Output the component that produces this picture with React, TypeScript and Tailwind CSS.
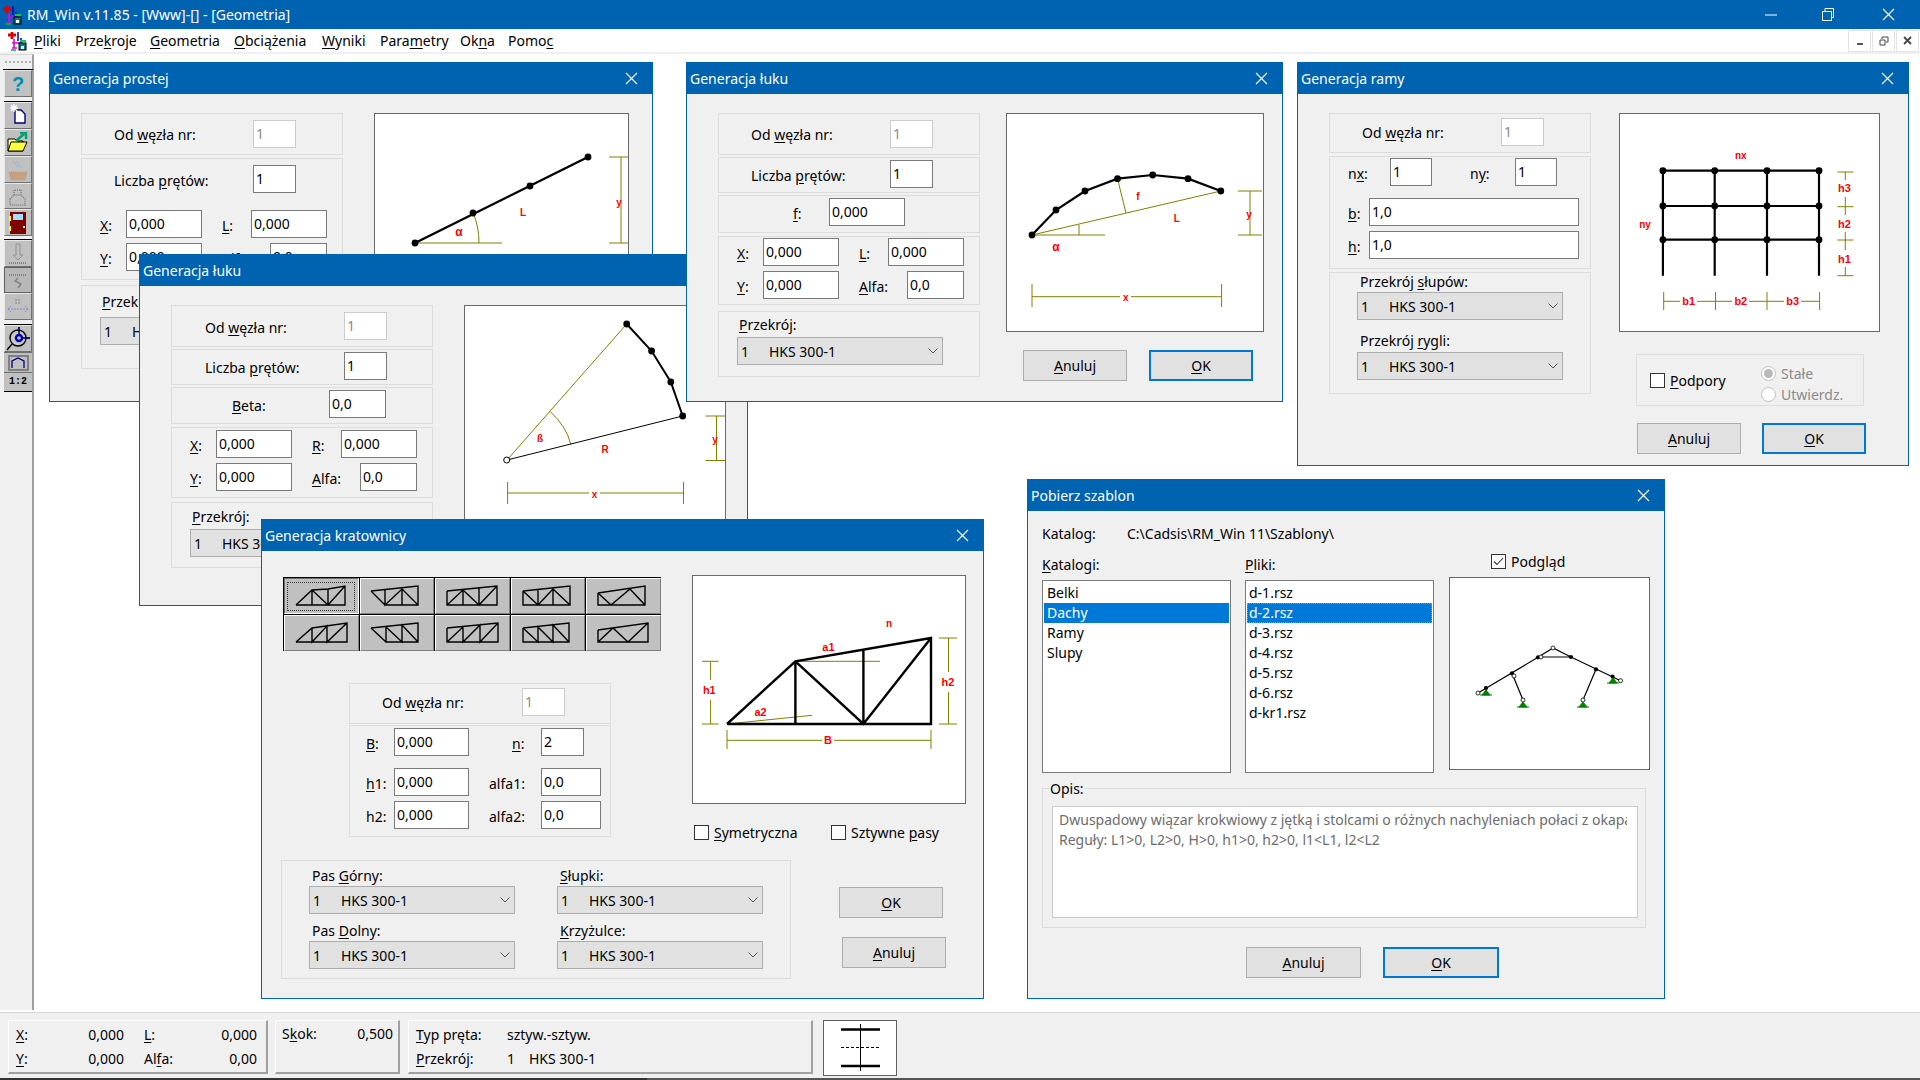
import React from "react";

const U = ({ children }: { children: React.ReactNode }) => <u className="underline underline-offset-2">{children}</u>;

const Dialog = ({ cls, title, children }: { cls: string; title: string; children: React.ReactNode }) => (
  <div className={`absolute box-border border border-[#0063b1] bg-[#f0f0f0] flex flex-col ${cls}`}>
    <div className="h-[31px] shrink-0 bg-[#0063b1] text-white flex items-center justify-between pl-[3px] pr-[14px]">
      <span className="leading-none">{title}</span>
      <svg width="13" height="13" viewBox="0 0 13 13"><path d="M1 1L12 12M12 1L1 12" stroke="#fff" strokeWidth="1.1" /></svg>
    </div>
    {children}
  </div>
);

const Input = ({ cls, v, off }: { cls: string; v: string; off?: boolean }) => (
  <div className={`box-border h-[28px] shrink-0 border bg-white pl-[2px] leading-[26px] ${off ? "border-[#cccccc] text-[#8a8a8a]" : "border-[#7a7a7a] text-black"} ${cls}`}>{v}</div>
);

const Group = ({ cls, children }: { cls: string; children?: React.ReactNode }) => (
  <div className={`box-border border border-[#dcdcdc] shrink-0 ${cls}`}>{children}</div>
);

const Select = ({ cls }: { cls: string }) => (
  <div className={`box-border h-[28px] flex items-center border border-[#adadad] bg-[#e1e1e1] pl-[3px] pr-[4px] shrink-0 ${cls}`}>
    <span className="w-[28px]">1</span>
    <span className="flex-1">HKS 300-1</span>
    <svg width="10" height="6" viewBox="0 0 10 6"><path d="M0.5 0.5L5 5L9.5 0.5" stroke="#555" fill="none" /></svg>
  </div>
);

const Btn = ({ cls, children, ok }: { cls: string; children: React.ReactNode; ok?: boolean }) => (
  <div className={`box-border h-[31px] flex items-center justify-center bg-[#e1e1e1] shrink-0 ${ok ? "border-2 border-[#0078d7]" : "border border-[#adadad]"} ${cls}`}>{children}</div>
);

const Check = ({ on }: { on?: boolean }) => (
  <div className="box-border w-[15px] h-[15px] border border-[#333] bg-white flex items-center justify-center shrink-0">
    {on && <svg width="11" height="9" viewBox="0 0 11 9"><path d="M1 4.5L4 7.5L10 1" stroke="#333" fill="none" strokeWidth="1.1" /></svg>}
  </div>
);

const T = ({ x, y, s, size }: { x: number; y: number; s: string; size?: number }) => (
  <text x={x} y={y + 4} textAnchor="middle" fill="#ff0000" fontSize={size ?? 10} fontWeight="700" fontFamily="Liberation Sans">{s}</text>
);

const Node = ({ x, y }: { x: number; y: number }) => <circle cx={x} cy={y} r="3.4" fill="#000" />;

const OLIVE = "#808000";

const ProstaSvg = () => (
  <svg width="253" height="218" viewBox="375 114 253 218" className="block">
    <path d="M415 243H502M473 213Q479 226 479 243M609 157H628M609 243H628M621 157V243" stroke={OLIVE} fill="none" />
    <path d="M415 243L588 157" stroke="#000" strokeWidth="2.4" />
    {[[415, 243], [473, 213], [530, 186], [588, 157]].map(([x, y]) => <Node key={x} x={x} y={y} />)}
    <T x={619} y={202} s="y" /><T x={523} y={212} s="L" /><T x={459} y={232} s="α" size={12} />
  </svg>
);

const Luk2Svg = () => (
  <svg width="260" height="218" viewBox="465 306 260 218" className="block">
    <path d="M507 460L626.7 324M550.4 411.7Q566 426 570.8 444M705.5 416H725M705.5 460.5H725M716.5 416V460.5M507.6 493H683.5M507.6 482V504M683.5 482V504" stroke={OLIVE} fill="none" />
    <path d="M507 460L682.7 416" stroke="#000" />
    <path d="M626.7 324L651.6 351L670.8 382L682.7 416" stroke="#000" strokeWidth="2" fill="none" />
    {[[626.7, 324], [651.6, 351], [670.8, 382], [682.7, 416]].map(([x, y]) => <Node key={x} x={x} y={y} />)}
    <circle cx="506.7" cy="460" r="3" fill="#fff" stroke="#000" />
    <T x={540} y={438} s="ß" /><T x={605} y={449} s="R" /><T x={715} y={439} s="y" />
    <rect x="589" y="488" width="11" height="11" fill="#fff" /><T x={594.5} y={493.5} s="x" />
  </svg>
);

const Luk3Svg = () => (
  <svg width="256" height="217" viewBox="1007 114 256 217" className="block">
    <path d="M1032 235L1220.8 191M1032 235H1105M1117.5 178.7L1126 213M1079 224.7V235M1238 191H1262M1238 235H1262M1250 191V235M1032 296.7H1221.6M1032 284V307M1221.6 284V307" stroke={OLIVE} fill="none" />
    <path d="M1032 235L1056 210L1085 191L1117.5 178.7L1152.7 175L1188 178.7L1220.8 191" stroke="#000" strokeWidth="2.2" fill="none" />
    {[[1032, 235], [1056, 210], [1085, 191], [1117.5, 178.7], [1152.7, 175], [1188, 178.7], [1220.8, 191]].map(([x, y]) => <Node key={x} x={x} y={y} />)}
    <T x={1138} y={196} s="f" /><T x={1176.7} y={218} s="L" /><T x={1249} y={214} s="y" /><T x={1056} y={247} s="α" size={12} />
    <rect x="1120" y="292" width="11" height="10" fill="#fff" /><T x={1125.7} y={297} s="x" />
  </svg>
);

const RamaSvg = () => {
  const xs = [1662.9, 1714.7, 1767, 1819];
  const ys = [170.7, 206, 239.7];
  return (
    <svg width="259" height="217" viewBox="1620 114 259 217" className="block">
      <path d="M1845.3 172V180M1845.3 197V215M1845.3 232V250M1845.3 267V276M1837.5 172H1853.5M1837.5 206.7H1853.5M1837.5 240H1853.5M1837.5 275.7H1853.5M1663.7 292V310M1715.5 292V310M1767 292V310M1819.6 292V310M1663.7 301.3H1680M1697 301.3H1732M1749 301.3H1784M1801 301.3H1819.6" stroke={OLIVE} fill="none" />
      <path d={xs.map((x) => `M${x} 170.7V275.7`).join("") + ys.map((y) => `M1662.9 ${y}H1819`).join("")} stroke="#000" strokeWidth="2.2" fill="none" />
      {xs.flatMap((x) => ys.map((y) => <Node key={`${x}-${y}`} x={x} y={y} />))}
      <T x={1740.8} y={155} s="nx" /><T x={1645} y={224} s="ny" /><T x={1844.5} y={188} s="h3" size={11} /><T x={1844.5} y={223.7} s="h2" size={11} /><T x={1844.5} y={258.7} s="h1" size={11} />
      <T x={1688.6} y={301} s="b1" size={11} /><T x={1740.8} y={301} s="b2" size={11} /><T x={1792.7} y={301} s="b3" size={11} />
    </svg>
  );
};

const KrataSvg = () => (
  <svg width="272" height="227" viewBox="693 576 272 227" className="block">
    <path d="M795.4 661.3H880M727 724L812 715.3M702 661.3H718.6M702 724H718.6M710.6 661.3V680M710.6 700V724M939 638H957M939 724H957M948.5 638V672M948.5 692V724M727 740.3H822M834 740.3H931M727 730V749M931 730V749" stroke={OLIVE} fill="none" />
    <path d="M727 724H931V638L795.4 661.3L727 724M795.4 661.3V724M795.4 661.3L863.4 724L931 638M863.4 650V724" stroke="#000" strokeWidth="2.4" fill="none" />
    <T x={889} y={623} s="n" /><T x={828.4} y={647} s="a1" size={11} /><T x={760.5} y={712} s="a2" size={11} /><T x={709.3} y={690} s="h1" size={11} /><T x={948} y={681.7} s="h2" size={11} /><T x={828} y={740.3} s="B" size={11} />
  </svg>
);

const SzablonSvg = () => (
  <svg width="199" height="191" viewBox="1450 578 199 191" className="block">
    <path d="M1478 693L1538 657.3L1553 648L1571 657L1620.6 680.7M1541 657H1571M1512 673.3L1523 700M1596 669.3L1583 700" stroke="#000" fill="none" strokeWidth="1.2" />
    {[[1486, 688], [1512, 673.3], [1538, 657.3], [1571, 657], [1596, 669.3], [1612.6, 676.7]].map(([x, y]) => <circle key={x} cx={x} cy={y} r="2.1" fill="#000" />)}
    {[[1478, 693], [1553, 648], [1541, 657], [1620.6, 680.7], [1523, 700], [1583, 700], [1514, 676]].map(([x, y]) => <circle key={x} cx={x} cy={y} r="2" fill="#fff" stroke="#000" strokeWidth="0.8" />)}
    {[[1486, 695], [1523, 707], [1583, 707], [1613, 683]].map(([x, y]) => <path key={x} d={`M${x - 6} ${y}H${x + 6}M${x - 4} ${y}L${x} ${y - 5}L${x + 4} ${y}Z`} stroke="#008000" fill="#008000" />)}
  </svg>
);

const TRUSS = [
  "M1 20H50V1L33 4L17 5L1 20M17 5V20L33 20M17 5L33 20L50 1M33 4V20",
  "M1 6L48 1V20H15L1 6M15 5V20L32 4V20M32 4L48 20",
  "M1 6L51 1V20H1V6M1 20L17 5V20M17 5L33 20L51 1M33 3V20",
  "M1 6L48 1V20H1V6M1 6L16 20L31 4L48 20M16 5V20M31 4V20",
  "M1 8L48 1V20H1V8M1 8L14 20L33 4L48 20",
  "M1 20H52V1L17 6L1 20M17 6V20L32 4V20L52 1",
  "M1 6L48 1V20H16L1 6M16 5V20M16 5L32 20V3L48 20",
  "M1 6L52 1V20H1V6M1 20L17 5V20L34 3V20L52 1",
  "M1 6L47 1V20H1V6M1 6L16 20V5L31 20V3L47 20",
  "M1 8L51 1V20H1V8M1 20L16 6L31 20L51 1",
];

const TrussBtn = ({ d, first }: { d: string; first?: boolean }) => (
  <div className={`box-border h-[37px] border-l border-t border-black`}>
    <div className={`box-border h-full flex items-center justify-center bg-[#c0c0c0] border-b border-r ${first ? "border-t border-l border-t-[#707070] border-l-[#707070] border-b-white border-r-white" : "border-t border-l border-t-white border-l-white border-b-[#808080] border-r-[#808080]"}`}>
      <div className={`box-border w-[68px] h-[29px] flex items-center justify-center ${first ? "border border-dotted border-[#333]" : ""}`}>
        <svg width="53" height="22" viewBox="0 0 53 22"><path d={d} stroke="#000" fill="none" strokeWidth="1.4" /></svg>
      </div>
    </div>
  </div>
);

const TB = ({ cls, children }: { cls: string; children?: React.ReactNode }) => (
  <div className={`box-border bg-[#c0c0c0] border-t border-l border-[#e8e8e8] border-r border-b border-r-[#707070] border-b-[#707070] flex items-center justify-center overflow-hidden ${cls}`}>{children}</div>
);

const Toolbar = () => (
  <div className="w-[34px] shrink-0 box-border border-r-2 border-r-[#a0a0a0] border-t border-t-[#d8d8d8] bg-[#f0f0f0] flex flex-col pl-[4px]">
    <div className="h-[15px] shrink-0 border-b border-[#000] relative mr-[-1px] ml-[-1px]">
      <div className="absolute left-[2px] right-[2px] top-[6px] border-t-2 border-dotted border-[#b0b0b0]" />
    </div>
    <TB cls="h-[27px]"><span className="text-[20px] leading-none font-bold text-[#0090b0] font-['Liberation_Sans',sans-serif]">?</span></TB>
    <div className="h-[5px] shrink-0 border-b border-black" />
    <TB cls="h-[27px]">
      <svg width="22" height="24" viewBox="0 0 22 24"><path d="M8 6H14L18 10V19H8Z" fill="#fff" stroke="#000080" strokeWidth="1.4" /><path d="M7 0V8M3 4H11M4 1L10 7M10 1L4 7" stroke="#fff" strokeWidth="1.3" /></svg>
    </TB>
    <TB cls="h-[27px]">
      <svg width="24" height="22" viewBox="0 0 24 22"><path d="M2 7H9L11 9H17V19H2Z" fill="#ffff80" stroke="#000" /><path d="M2 19L5 10H21L17 19Z" fill="#ffff40" stroke="#000" /><path d="M10 9L18 2M14 1H20V7" stroke="#00a070" strokeWidth="2.4" fill="none" /></svg>
    </TB>
    <TB cls="h-[27px]">
      <svg width="24" height="22" viewBox="0 0 24 22"><path d="M3 13H21L19 21H5Z" fill="#c8a080" stroke="#a0a0a0" strokeDasharray="1 1" /><path d="M7 2L13 9M10 2L16 9" stroke="#80b0d8" strokeDasharray="2 1" /></svg>
    </TB>
    <TB cls="h-[26px]">
      <svg width="24" height="22" viewBox="0 0 24 22"><path d="M8 10V5H15V10M4 14L8 10H15L19 14V20H4Z" fill="none" stroke="#808080" strokeDasharray="1 1" strokeWidth="1.6" /></svg>
    </TB>
    <TB cls="h-[27px]">
      <svg width="22" height="24" viewBox="0 0 22 24"><rect x="3" y="1" width="16" height="22" fill="#800000" /><rect x="6" y="3" width="10" height="6" fill="#a0e0ff" /><rect x="2" y="5" width="2" height="5" fill="#ffff00" /><rect x="2" y="15" width="2" height="5" fill="#ffff00" /><rect x="16" y="15" width="2" height="2" fill="#fff" /></svg>
    </TB>
    <div className="h-[4px] shrink-0 border-b border-black" />
    <TB cls="h-[27px]">
      <svg width="24" height="24" viewBox="0 0 24 24"><path d="M10 2H14V13H17L12 18L7 13H10Z" fill="none" stroke="#909090" /><path d="M3 21H21" stroke="#808080" strokeDasharray="1 1" strokeWidth="2" /></svg>
    </TB>
    <div className="box-border h-[26px] shrink-0 bg-[#b8b8b8] border border-[#606060] flex items-center justify-center">
      <svg width="24" height="22" viewBox="0 0 24 22"><path d="M3 6H21" stroke="#808080" strokeDasharray="1 1" strokeWidth="2" /><path d="M12 9L9 12L15 15L12 19" stroke="#808080" fill="none" strokeWidth="1.4" /></svg>
    </div>
    <TB cls="h-[27px]">
      <svg width="24" height="22" viewBox="0 0 24 22"><path d="M9 4H15M9 7H15" stroke="#808080" strokeDasharray="2 1" /><path d="M2 13H22M2 13L5 10M2 13L5 16M22 13L19 10M22 13L19 16" stroke="#8888cc" strokeDasharray="2 1" fill="none" /></svg>
    </TB>
    <div className="h-[5px] shrink-0 border-b border-black" />
    <TB cls="h-[27px]">
      <svg width="26" height="25" viewBox="0 0 26 25"><circle cx="13" cy="12" r="8" fill="#c8c8c8" stroke="#000" strokeWidth="1.4" /><circle cx="14" cy="12" r="3" fill="none" stroke="#0000c0" strokeWidth="2.4" /><path d="M14 1V8M18 12H25M7 18L2 24" stroke="#000" strokeWidth="1.4" /><path d="M14 1V6M20 12H25" stroke="#0000c0" /></svg>
    </TB>
    <div className="box-border h-[21px] shrink-0 bg-[#c0c0c0] border-t border-b border-[#707070] flex items-center justify-center">
      <div className="box-border w-[21px] h-[16px] border-2 border-[#808080] flex items-center justify-center">
        <svg width="14" height="11" viewBox="0 0 14 11"><path d="M1 11V4L7 1L13 4V11" stroke="#000080" fill="none" strokeWidth="1.3" /></svg>
      </div>
    </div>
    <div className="box-border h-[19px] shrink-0 bg-[#c0c0c0] border-b border-[#000] flex items-center justify-center font-['Liberation_Mono',monospace] text-[10px] font-bold leading-none">1:2</div>
    <div className="flex-1" />
  </div>
);

const AppIcon = ({ cls }: { cls: string }) => (
  <svg width="20" height="20" viewBox="0 0 20 20" className={cls}>
    <path d="M1 4H9M5 1V8" stroke="#e00000" strokeWidth="2.8" />
    <path d="M11 1V10M14 7V13" stroke="#0000c0" strokeWidth="1.5" />
    <path d="M7 8V17M5 12H13M5 17H10" stroke="#e000e0" strokeWidth="1.6" fill="none" />
    <path d="M4 19H9" stroke="#00c040" strokeWidth="1.6" />
    <path d="M13 10H19" stroke="#00d050" strokeWidth="2" />
    <rect x="12" y="12" width="7" height="7" fill="#008080" stroke="#000" />
    <rect x="14" y="15" width="3" height="3" fill="#fff" />
  </svg>
);

const MENU: [string, React.ReactNode][] = [
  ["w-[41px]", <><U>P</U>liki</>],
  ["w-[75px]", <>Prze<U>k</U>roje</>],
  ["w-[84px]", <><U>G</U>eometria</>],
  ["w-[88px]", <><U>O</U>bciążenia</>],
  ["w-[58px]", <><U>W</U>yniki</>],
  ["w-[80px]", <>Para<U>m</U>etry</>],
  ["w-[48px]", <>Ok<U>n</U>a</>],
  ["w-[60px]", <>Pomo<U>c</U></>],
];

const Raised = ({ cls, children }: { cls: string; children: React.ReactNode }) => (
  <div className={`box-border h-[54px] border-t border-l border-t-white border-l-white border-r-2 border-b-2 border-r-[#a0a0a0] border-b-[#a0a0a0] flex flex-col shrink-0 ${cls}`}>{children}</div>
);

const ROW = "flex items-center [&>span]:mt-[2px]";

export default function App() {
  return (
    <div className="relative w-[1920px] h-[1080px] overflow-hidden bg-white flex flex-col text-[14px] text-black font-['Noto_Sans','Open_Sans',sans-serif]">
      {/* Title bar */}
      <div className="h-[29px] shrink-0 bg-[#0063b1] text-white flex items-center">
        <AppIcon cls="ml-[2px] mr-[5px]" />
        <span className="flex-1">RM_Win v.11.85 - [Www]-[] - [Geometria]</span>
        <svg width="12" height="2" viewBox="0 0 12 2" className="mr-[45px]"><path d="M0 1H12" stroke="#fff" /></svg>
        <svg width="12" height="13" viewBox="0 0 12 13" className="mr-[48px]"><path d="M0.5 3.5H9.5V12.5H0.5ZM3 3V0.5H11.5V9.5H9.5" stroke="#fff" fill="none" /></svg>
        <svg width="13" height="13" viewBox="0 0 13 13" className="mr-[25px]"><path d="M1 1L12 12M12 1L1 12" stroke="#fff" strokeWidth="1.1" /></svg>
      </div>
      {/* Menu */}
      <div className="h-[23px] shrink-0 flex items-center border-b-0">
        <AppIcon cls="ml-[7px] mr-[7px]" />
        {MENU.map(([w, l], i) => <span key={i} className={w}>{l}</span>)}
        <div className="flex-1" />
        {["min", "res", "cls"].map((k) => (
          <div key={k} className="box-border w-[23px] h-[22px] border border-[#e4e4e4] flex items-center justify-center mr-[1px]">
            {k === "min" && <svg width="8" height="10" viewBox="0 0 8 10"><path d="M1 8H7" stroke="#555" strokeWidth="2" /></svg>}
            {k === "res" && <svg width="10" height="10" viewBox="0 0 10 10"><path d="M1 4H6V9H1ZM3 3V1H9V6H7" stroke="#444" fill="none" /></svg>}
            {k === "cls" && <svg width="9" height="9" viewBox="0 0 9 9"><path d="M1 1L8 8M8 1L1 8" stroke="#444" strokeWidth="1.8" /></svg>}
          </div>
        ))}
      </div>
      <div className="h-[2px] shrink-0 bg-[#f0f0f0]" />
      {/* Main */}
      <div className="flex-1 flex min-h-0">
        <Toolbar />
        <div className="flex-1 bg-white" />
      </div>
      {/* Status */}
      <div className="h-[66px] shrink-0 mt-[2px] bg-[#f0f0f0] border-t border-[#d8d8d8] flex items-start pl-[8px] pt-[7px] leading-[24px]">
        <Raised cls="w-[260px] pl-[7px] justify-center">
          <div className="flex"><span className="w-[26px]"><U>X</U>:</span><span className="w-[82px] text-right">0,000</span><span className="w-[20px]" /><span className="w-[30px]"><U>L</U>:</span><span className="w-[83px] text-right">0,000</span></div>
          <div className="flex"><span className="w-[26px]"><U>Y</U>:</span><span className="w-[82px] text-right">0,000</span><span className="w-[20px]" /><span className="w-[30px]">Al<U>f</U>a:</span><span className="w-[83px] text-right">0,00</span></div>
        </Raised>
        <Raised cls="w-[125px] ml-[7px] pl-[6px] justify-start pt-[1px]">
          <div className="flex"><span className="w-[50px]">S<U>k</U>ok:</span><span className="w-[61px] text-right">0,500</span></div>
        </Raised>
        <Raised cls="w-[405px] ml-[8px] pl-[7px] justify-center">
          <div className="flex"><span className="w-[91px]"><U>T</U>yp pręta:</span><span>sztyw.-sztyw.</span></div>
          <div className="flex"><span className="w-[91px]"><U>P</U>rzekrój:</span><span className="w-[22px]">1</span><span>HKS 300-1</span></div>
        </Raised>
        <div className="box-border w-[74px] h-[56px] ml-[10px] border border-[#606060] bg-white shrink-0">
          <svg width="72" height="54" viewBox="824 1021 72 54" className="block">
            <path d="M841 1029.5H880M841 1066H880" stroke="#000" strokeWidth="2.4" />
            <path d="M860.5 1024V1071" stroke="#000" />
            <path d="M841 1047.5H880" stroke="#000" strokeDasharray="3 2" />
          </svg>
        </div>
      </div>
      <div className="h-[2px] shrink-0 flex"><div className="w-[647px] bg-[#333333]" /><div className="flex-1 bg-[#555555]" /></div>

      {/* Dialog: Generacja prostej */}
      <Dialog cls="left-[49px] top-[62px] w-[604px] h-[340px]" title="Generacja prostej">
        <div className="flex pl-[31px] pt-[19px]">
          <div className="w-[262px] flex flex-col">
            <Group cls="h-[42px] flex items-center pl-[32px]"><span className="w-[139px]">Od <U>w</U>ęzła nr:</span><Input cls="w-[43px]" v="1" off /></Group>
            <Group cls="h-[122px] mt-[3px] pl-[18px]">
              <div className={`${ROW} mt-[6px] pl-[14px]`}><span className="w-[139px]">Liczba <U>p</U>rętów:</span><Input cls="w-[43px]" v="1" /></div>
              <div className={`${ROW} mt-[17px]`}><span className="w-[26px]"><U>X</U>:</span><Input cls="w-[76px]" v="0,000" /><span className="w-[20px]" /><span className="w-[29px]"><U>L</U>:</span><Input cls="w-[76px]" v="0,000" /></div>
              <div className={`${ROW} mt-[5px]`}><span className="w-[26px]"><U>Y</U>:</span><Input cls="w-[76px]" v="0,000" /><span className="w-[20px]" /><span className="w-[48px]"><U>A</U>lfa:</span><Input cls="w-[57px]" v="0,0" /></div>
            </Group>
            <Group cls="h-[84px] mt-[5px] pl-[18px]">
              <div className="h-[31px] flex items-center pl-[2px]"><span><U>P</U>rzekrój:</span></div>
              <Select cls="w-[206px]" />
            </Group>
          </div>
          <div className="ml-[31px]">
            <div className="box-border w-[255px] h-[220px] border border-[#696969] bg-white"><ProstaSvg /></div>
          </div>
        </div>
      </Dialog>

      {/* Dialog: Generacja łuku (środek) */}
      <Dialog cls="left-[139px] top-[254px] w-[609px] h-[352px]" title="Generacja łuku">
        <div className="flex pl-[31px] pt-[19px]">
          <div className="w-[262px] flex flex-col">
            <Group cls="h-[42px] flex items-start pl-[33px] pt-[6px]"><span className="w-[139px] mt-[5px]">Od <U>w</U>ęzła nr:</span><Input cls="w-[43px]" v="1" off /></Group>
            <Group cls="h-[36px] mt-[2px] flex items-start pl-[33px] pt-[2px]"><span className="w-[139px] mt-[5px]">Liczba <U>p</U>rętów:</span><Input cls="w-[43px]" v="1" /></Group>
            <Group cls="h-[37px] mt-[2px] flex items-start pl-[60px] pt-[2px]"><span className="w-[97px] mt-[5px]"><U>B</U>eta:</span><Input cls="w-[57px]" v="0,0" /></Group>
            <Group cls="h-[71px] mt-[3px] pl-[18px] pt-[2px]">
              <div className={ROW}><span className="w-[26px]"><U>X</U>:</span><Input cls="w-[76px]" v="0,000" /><span className="w-[20px]" /><span className="w-[29px]"><U>R</U>:</span><Input cls="w-[76px]" v="0,000" /></div>
              <div className={`${ROW} mt-[5px]`}><span className="w-[26px]"><U>Y</U>:</span><Input cls="w-[76px]" v="0,000" /><span className="w-[20px]" /><span className="w-[48px]"><U>A</U>lfa:</span><Input cls="w-[57px]" v="0,0" /></div>
            </Group>
            <Group cls="h-[66px] mt-[4px] pl-[18px]">
              <div className="h-[26px] flex items-center pl-[2px]"><span><U>P</U>rzekrój:</span></div>
              <Select cls="w-[206px]" />
            </Group>
          </div>
          <div className="ml-[31px]">
            <div className="box-border w-[262px] h-[220px] border border-[#696969] bg-white"><Luk2Svg /></div>
          </div>
        </div>
      </Dialog>

      {/* Dialog: Generacja łuku (prawy) */}
      <Dialog cls="left-[686px] top-[62px] w-[597px] h-[340px]" title="Generacja łuku">
        <div className="flex pl-[31px] pt-[19px]">
          <div className="w-[262px] flex flex-col">
            <Group cls="h-[42px] flex items-start pl-[32px] pt-[6px]"><span className="w-[139px] mt-[4px]">Od <U>w</U>ęzła nr:</span><Input cls="w-[43px]" v="1" off /></Group>
            <Group cls="h-[36px] mt-[2px] flex items-start pl-[32px] pt-[2px]"><span className="w-[139px] mt-[5px]">Liczba <U>p</U>rętów:</span><Input cls="w-[43px]" v="1" /></Group>
            <Group cls="h-[38px] mt-[2px] flex items-start pl-[74px] pt-[2px]"><span className="w-[36px] mt-[5px]"><U>f</U>:</span><Input cls="w-[76px]" v="0,000" /></Group>
            <Group cls="h-[69px] mt-[3px] pl-[18px] pt-[1px]">
              <div className={ROW}><span className="w-[26px]"><U>X</U>:</span><Input cls="w-[76px]" v="0,000" /><span className="w-[20px]" /><span className="w-[29px]"><U>L</U>:</span><Input cls="w-[76px]" v="0,000" /></div>
              <div className={`${ROW} mt-[5px]`}><span className="w-[26px]"><U>Y</U>:</span><Input cls="w-[76px]" v="0,000" /><span className="w-[20px]" /><span className="w-[48px]"><U>A</U>lfa:</span><Input cls="w-[57px]" v="0,0" /></div>
            </Group>
            <Group cls="h-[66px] mt-[6px] pl-[18px]">
              <div className="h-[25px] flex items-center pl-[2px]"><span><U>P</U>rzekrój:</span></div>
              <Select cls="w-[206px]" />
            </Group>
          </div>
          <div className="ml-[26px]">
            <div className="box-border w-[258px] h-[219px] border border-[#696969] bg-white"><Luk3Svg /></div>
            <div className="flex ml-[17px] mt-[18px] gap-[22px]">
              <Btn cls="w-[104px]"><span><U>A</U>nuluj</span></Btn>
              <Btn cls="w-[104px]" ok><span><U>O</U>K</span></Btn>
            </div>
          </div>
        </div>
      </Dialog>

      {/* Dialog: Generacja ramy */}
      <Dialog cls="left-[1297px] top-[62px] w-[612px] h-[404px]" title="Generacja ramy">
        <div className="flex pl-[31px] pt-[19px]">
          <div className="w-[262px] flex flex-col">
            <Group cls="h-[40px] flex items-start pl-[32px] pt-[4px]"><span className="w-[139px] mt-[4px]">Od <U>w</U>ęzła nr:</span><Input cls="w-[43px]" v="1" off /></Group>
            <Group cls="h-[113px] mt-[3px] pl-[18px] pt-[1px]">
              <div className={ROW}><span className="w-[42px]">n<U>x</U>:</span><Input cls="w-[42px]" v="1" /><span className="w-[38px]" /><span className="w-[45px]">n<U>y</U>:</span><Input cls="w-[42px]" v="1" /></div>
              <div className={`${ROW} mt-[12px]`}><span className="w-[21px]"><U>b</U>:</span><Input cls="w-[210px]" v="1,0" /></div>
              <div className={`${ROW} mt-[5px]`}><span className="w-[21px]"><U>h</U>:</span><Input cls="w-[210px]" v="1,0" /></div>
            </Group>
            <Group cls="h-[122px] mt-[3px] pl-[27px]">
              <div className="h-[19px] flex items-center pl-[3px] pb-[2px]"><span>Przekrój <U>s</U>łupów:</span></div>
              <Select cls="w-[206px]" />
              <div className="h-[21px] flex items-center mt-[11px] pl-[3px] pb-[2px]"><span>Przekrój <U>r</U>ygli:</span></div>
              <Select cls="w-[206px]" />
            </Group>
          </div>
          <div className="ml-[28px]">
            <div className="box-border w-[261px] h-[219px] border border-[#696969] bg-white"><RamaSvg /></div>
            <Group cls="w-[228px] h-[52px] mt-[22px] ml-[17px] flex items-center pl-[13px]">
              <Check /><span className="ml-[5px] w-[90px] mt-[1px]"><U>P</U>odpory</span>
              <div className="flex flex-col text-[#8a8a8a] leading-[21px] mt-[7px] ml-[1px]">
                <div className="flex items-center"><div className="box-border w-[15px] h-[15px] rounded-full border border-[#c0c0c0] bg-white flex items-center justify-center mr-[5px]"><div className="w-[9px] h-[9px] rounded-full bg-[#b8b8b8]" /></div><span>Stałe</span></div>
                <div className="flex items-center"><div className="box-border w-[15px] h-[15px] rounded-full border border-[#c0c0c0] bg-white mr-[5px]" /><span>Utwierdz.</span></div>
              </div>
            </Group>
            <div className="flex ml-[18px] mt-[17px] gap-[21px]">
              <Btn cls="w-[104px]"><span><U>A</U>nuluj</span></Btn>
              <Btn cls="w-[104px]" ok><span><U>O</U>K</span></Btn>
            </div>
          </div>
        </div>
      </Dialog>

      {/* Dialog: Generacja kratownicy */}
      <Dialog cls="left-[261px] top-[519px] w-[723px] h-[480px]" title="Generacja kratownicy">
        <div className="pl-[19px] pt-[24px]">
          <div className="flex h-[285px]">
            <div className="w-[411px] shrink-0">
              <div className="ml-[2px] mt-[2px] w-[378px] grid grid-cols-5">
                {TRUSS.map((d, i) => <TrussBtn key={i} d={d} first={i === 0} />)}
              </div>
              <div className="ml-[68px] mt-[32px] w-[262px]">
                <Group cls="h-[41px] flex items-start pl-[32px] pt-[4px]"><span className="w-[140px] mt-[4px]">Od <U>w</U>ęzła nr:</span><Input cls="w-[43px]" v="1" off /></Group>
                <Group cls="h-[112px] mt-[1px] pl-[16px] pt-[2px]">
                  <div className={ROW}><span className="w-[28px]"><U>B</U>:</span><Input cls="w-[75px]" v="0,000" /><span className="w-[43px]" /><span className="w-[29px]"><U>n</U>:</span><Input cls="w-[43px]" v="2" /></div>
                  <div className={`${ROW} mt-[12px]`}><span className="w-[28px]"><U>h</U>1:</span><Input cls="w-[75px]" v="0,000" /><span className="w-[20px]" /><span className="w-[52px]">alfa1:</span><Input cls="w-[60px]" v="0,0" /></div>
                  <div className={`${ROW} mt-[5px]`}><span className="w-[28px]">h2:</span><Input cls="w-[75px]" v="0,000" /><span className="w-[20px]" /><span className="w-[52px]">alfa2:</span><Input cls="w-[60px]" v="0,0" /></div>
                </Group>
              </div>
            </div>
            <div>
              <div className="box-border w-[274px] h-[229px] border border-[#696969] bg-white"><KrataSvg /></div>
              <div className="flex items-center mt-[18px] ml-[2px]">
                <Check /><span className="ml-[5px] w-[117px]"><U>S</U>ymetryczna</span>
                <Check /><span className="ml-[5px]">Sztywne <U>p</U>asy</span>
              </div>
            </div>
          </div>
          <div className="flex">
            <Group cls="w-[510px] h-[119px] pl-[27px] pt-[7px]">
              <div className="grid grid-cols-[206px_206px] gap-x-[42px] gap-y-[9px]">
                <div><div className="h-[18px] flex items-center pl-[3px] pb-[4px]"><span>Pas <U>G</U>órny:</span></div><Select cls="w-[206px]" /></div>
                <div><div className="h-[18px] flex items-center pl-[3px] pb-[4px]"><span><U>S</U>łupki:</span></div><Select cls="w-[206px]" /></div>
                <div><div className="h-[18px] flex items-center pl-[3px] pb-[4px]"><span>Pas <U>D</U>olny:</span></div><Select cls="w-[206px]" /></div>
                <div><div className="h-[18px] flex items-center pl-[3px] pb-[4px]"><span><U>K</U>rzyżulce:</span></div><Select cls="w-[206px]" /></div>
              </div>
            </Group>
            <div className="ml-[48px] pt-[27px]">
              <Btn cls="w-[104px]"><span><U>O</U>K</span></Btn>
              <Btn cls="w-[104px] mt-[19px] ml-[3px]"><span><U>A</U>nuluj</span></Btn>
            </div>
          </div>
        </div>
      </Dialog>

      {/* Dialog: Pobierz szablon */}
      <Dialog cls="left-[1027px] top-[479px] w-[638px] h-[520px]" title="Pobierz szablon">
        <div className="pl-[14px] pt-[13px]">
          <div className="h-[18px] flex items-center"><span className="w-[85px]">Katalog:</span><span>C:\Cadsis\RM_Win 11\Szablony\</span></div>
          <div className="flex mt-[10px] h-[221px]">
            <div className="w-[189px] pt-[3px]">
              <div className="h-[18px] flex items-center"><span><U>K</U>atalogi:</span></div>
              <div className="box-border h-[193px] mt-[7px] border border-[#7a7a7a] bg-white px-[1px] pt-[2px] leading-[20px]">
                <div className="pl-[3px]">Belki</div>
                <div className="pl-[3px] bg-[#0078d7] text-white">Dachy</div>
                <div className="pl-[3px]">Ramy</div>
                <div className="pl-[3px]">Slupy</div>
              </div>
            </div>
            <div className="w-[189px] ml-[14px] pt-[3px]">
              <div className="h-[18px] flex items-center"><span><U>P</U>liki:</span></div>
              <div className="box-border h-[193px] mt-[7px] border border-[#7a7a7a] bg-white px-[1px] pt-[2px] leading-[20px]">
                {["d-1.rsz", "d-2.rsz", "d-3.rsz", "d-4.rsz", "d-5.rsz", "d-6.rsz", "d-kr1.rsz"].map((f) => (
                  <div key={f} className={`pl-[2px] ${f === "d-2.rsz" ? "bg-[#0078d7] text-white outline-1 outline-dotted outline-offset-[-1px] outline-[#e08030]" : ""}`}>{f}</div>
                ))}
              </div>
            </div>
            <div className="w-[201px] ml-[15px]">
              <div className="flex items-center ml-[42px] h-[16px] mt-[1px]"><Check on /><span className="ml-[5px]">Podgląd</span></div>
              <div className="box-border h-[193px] mt-[8px] border border-[#696969] bg-white"><SzablonSvg /></div>
            </div>
          </div>
          <Group cls="relative w-[604px] h-[140px] mt-[15px] pl-[9px] pt-[17px]">
            <span className="absolute left-[6px] -top-[8px] leading-[16px] bg-[#f0f0f0] px-[1px]">Opis:</span>
            <div className="box-border w-[586px] h-[112px] border border-[#cccccc] bg-white pl-[6px] pr-[10px] pt-[3px] leading-[20px] text-[#6d6d6d] whitespace-nowrap overflow-hidden">
              <div className="overflow-hidden">Dwuspadowy wiązar krokwiowy z jętką i stolcami o różnych nachyleniach połaci z okapami</div>
              <div>Reguły: L1&gt;0, L2&gt;0, H&gt;0, h1&gt;0, h2&gt;0, l1&lt;L1, l2&lt;L2</div>
            </div>
          </Group>
          <div className="flex ml-[204px] mt-[19px] gap-[22px]">
            <Btn cls="w-[115px]"><span><U>A</U>nuluj</span></Btn>
            <Btn cls="w-[116px]" ok><span><U>O</U>K</span></Btn>
          </div>
        </div>
      </Dialog>
    </div>
  );
}
